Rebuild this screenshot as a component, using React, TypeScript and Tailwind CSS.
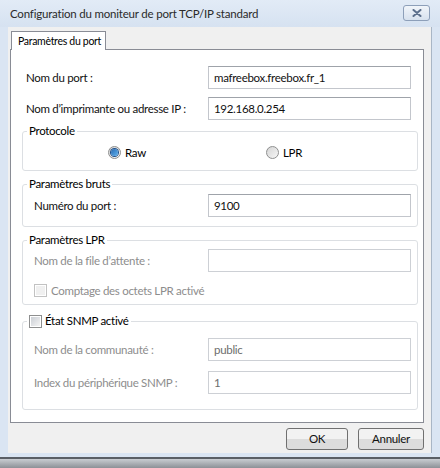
import type { ReactNode } from 'react'

function Field({ label, value = '', disabled = false }: { label: string; value?: string; disabled?: boolean }) {
  return (
    <div className="grid grid-cols-[1fr_203px] items-center">
      <span className={disabled ? 'text-[#8d8d8d]' : 'text-[#111]'}>{label}</span>
      <div
        className={
          disabled
            ? 'flex h-[23px] items-center border border-[#cdd0d5] bg-white pl-[5px] text-[#6d6d6d]'
            : 'flex h-[23px] items-center border border-[#c3c6cc] border-t-[#9fa3aa] bg-white pl-[5px] text-[#111]'
        }
      >
        {value}
      </div>
    </div>
  )
}

function Group({ title, children, className }: { title: ReactNode; children: ReactNode; className?: string }) {
  return (
    <fieldset className="rounded-[3px] border border-[#dcdfe3]">
      <legend className="ml-[4px] px-[2px] leading-[14px]">{title}</legend>
      <div className={className}>{children}</div>
    </fieldset>
  )
}

function Radio({ checked }: { checked?: boolean }) {
  return (
    <span className="flex h-[13px] w-[13px] items-center justify-center rounded-full border border-[#8e8f8f] bg-gradient-to-br from-[#d4d4d4] to-[#f7f7f7]">
      {checked && <span className="h-[7px] w-[7px] rounded-full bg-gradient-to-br from-[#2a6bb3] to-[#5fb2ef] ring-1 ring-[#1f4f8a]" />}
    </span>
  )
}

function Check({ disabled }: { disabled?: boolean }) {
  return (
    <span
      className={
        disabled
          ? 'flex h-[13px] w-[13px] items-center justify-center border border-[#c2c2c2] bg-white'
          : 'flex h-[13px] w-[13px] items-center justify-center border border-[#8e8f8f] bg-white'
      }
    >
      <span className={disabled ? 'h-[9px] w-[9px] bg-[#f0f0f0]' : 'h-[9px] w-[9px] bg-gradient-to-br from-[#cbcfd5] to-[#f4f4f4]'} />
    </span>
  )
}

function Button({ children, w }: { children: ReactNode; w: string }) {
  return (
    <button
      type="button"
      className={
        'flex h-[22px] items-center justify-center rounded-[3px] border border-[#707070] bg-gradient-to-b from-[#f2f2f2] from-50% to-[#dcdcdc] to-50% text-[#111] ' +
        w
      }
    >
      {children}
    </button>
  )
}

export default function App() {
  return (
    <div className="flex h-[468px] w-[440px] flex-col bg-[#dae5f3] font-['Lato',sans-serif] text-[11.5px] leading-[14px] tracking-[-0.3px]">
      {/* title bar */}
      <div className="flex h-[27px] items-center justify-between bg-gradient-to-b from-[#e2ebf6] to-[#d6e2f1] pl-[10px] pr-[10px]">
        <span className="text-[11.5px] tracking-[-0.2px] text-[#2a2a2a]">Configuration du moniteur de port TCP/IP standard</span>
        <div className="mt-[-2px] flex h-[16px] w-[27px] items-center justify-center rounded-[3px] border border-[#8d9fb9] bg-gradient-to-b from-[#f1f5fa] to-[#d7e1ee]">
          <svg width="10" height="8" viewBox="0 0 10 8">
            <path d="M1.5 1 L8.5 7 M8.5 1 L1.5 7" stroke="#5c6f8c" strokeWidth="2" strokeLinecap="round" />
          </svg>
        </div>
      </div>

      {/* client area */}
      <div className="mx-[8px] flex h-[426px] flex-col border-r border-[#a9b6c6] bg-[#f0f0f0] pl-[2px] pr-[7px] pt-[4px]">
        <div className="relative z-10 -mb-px ml-px flex h-[19px] w-[95px] items-center whitespace-nowrap border border-b-0 border-[#898c95] bg-white pl-[6px] text-[10.5px] tracking-[-0.3px]">
          Paramètres du port
        </div>
        <div className="flex h-[374px] flex-col border border-[#898c95] bg-white pl-[11px] pr-[5px] pt-[16px]">
          <div className="pl-[4px] pr-[7px]">
            <Field label="Nom du port :" value="mafreebox.freebox.fr_1" />
          </div>
          <div className="mt-[8px] pl-[4px] pr-[7px]">
            <Field label="Nom d’imprimante ou adresse IP :" value="192.168.0.254" />
          </div>

          <div className="mt-[4px]">
            <Group title="Protocole" className="pb-[10px] pl-[85px] pt-[7px]">
              <div className="flex h-[15px] items-center">
                <div className="flex w-[158px] items-center gap-[4px]">
                  <Radio checked />
                  <span>Raw</span>
                </div>
                <div className="flex items-center gap-[4px]">
                  <Radio />
                  <span>LPR</span>
                </div>
              </div>
            </Group>
          </div>

          <div className="mt-[6px]">
            <Group title="Paramètres bruts" className="pb-[9px] pl-[11px] pr-[6px] pt-[3px]">
              <Field label="Numéro du port :" value="9100" />
            </Group>
          </div>

          <div className="mt-[6px]">
            <Group title="Paramètres LPR" className="pb-[7px] pl-[11px] pr-[6px] pt-[2px]">
              <Field label="Nom de la file d’attente :" disabled />
              <div className="mt-[12px] flex h-[13px] items-center gap-[4px] text-[#8d8d8d]">
                <Check disabled />
                <span>Comptage des octets LPR activé</span>
              </div>
            </Group>
          </div>

          <div className="mt-[9px]">
            <Group
              title={
                <span className="flex items-center gap-[3px]">
                  <Check />
                  <span>État SNMP activé</span>
                </span>
              }
              className="pb-[15px] pl-[11px] pr-[6px] pt-[10px]"
            >
              <Field label="Nom de la communauté :" value="public" disabled />
              <div className="mt-[10px]">
                <Field label="Index du périphérique SNMP :" value="1" disabled />
              </div>
            </Group>
          </div>
        </div>

        <div className="mt-[5px] flex justify-end gap-[10px]">
          <Button w="w-[62px]">OK</Button>
          <Button w="w-[66px]">Annuler</Button>
        </div>
      </div>

      {/* bottom frame edge */}
      <div className="h-[4px]" />
      <div className="h-[2px] bg-[#5a5f66]" />
      <div className="flex-1 bg-gradient-to-b from-[#c9cdd2] to-[#8d9197]" />
    </div>
  )
}
